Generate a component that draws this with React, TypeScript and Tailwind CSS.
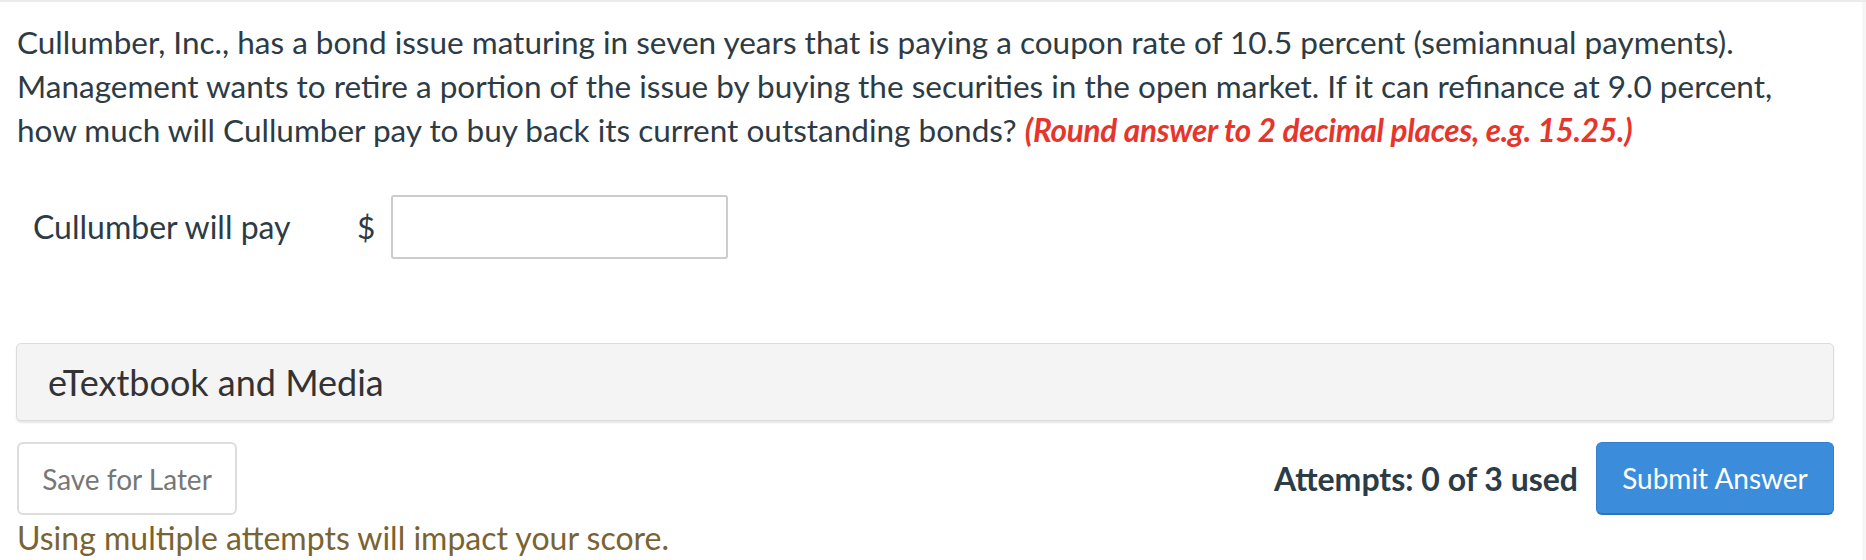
import React from 'react';

export default function App() {
  return (
    <div
      className="w-[1866px] h-[560px] bg-white border-t-2 border-[#ebebeb] overflow-hidden flex"
      style={{ fontFamily: 'Lato, "Open Sans", sans-serif' }}
    >
      <div className="flex-1 h-full pl-[17px] pr-[28px] pt-[18px]">
        {/* Question */}
        <p className="text-[31.5px] leading-[44px] text-[#2d3b45]">
          Cullumber, Inc., has a bond issue maturing in seven years that is paying a coupon rate of 10.5 percent (semiannual payments).
          <br />
          Management wants to retire a portion of the issue by buying the securities in the open market. If it can refinance at 9.0 percent,
          <br />
          how much will Cullumber pay to buy back its current outstanding bonds?{' '}
          <span className="font-bold italic text-[#e8352b] tracking-[-0.25px]">
            (Round answer to 2 decimal places, e.g. 15.25.)
          </span>
        </p>

        {/* Answer row */}
        <div className="flex items-center mt-[43px] pl-[16px]">
          <span className="text-[32px] leading-[44px] text-[#2d3b45] w-[324px]">Cullumber will pay</span>
          <span className="text-[31.5px] leading-[44px] text-[#2d3b45] w-[34px]">$</span>
          <input
            type="text"
            className="w-[337px] h-[64px] border-2 border-[#cccccc] rounded-[3px] bg-white outline-none"
          />
        </div>

        {/* eTextbook panel */}
        <div className="mt-[84px] -ml-[1px] h-[78px] bg-[#f4f4f4] border border-[#dcdcdc] rounded-[5px] shadow-[0_2px_2px_rgba(0,0,0,0.10)] flex items-center px-[31px]">
          <span className="text-[36px] leading-[44px] text-[#333333]">eTextbook and Media</span>
        </div>

        {/* Actions */}
        <div className="flex items-center justify-between mt-[21px]">
          <button className="w-[220px] h-[73px] border-2 border-[#dddddd] rounded-[6px] bg-white text-[28px] text-[#777777]">
            Save for Later
          </button>
          <div className="flex items-center gap-[18px]">
            <span className="text-[32px] font-bold text-[#2d3b45]">Attempts: 0 of 3 used</span>
            <button className="w-[238px] h-[73px] rounded-[6px] bg-[#3b8ddb] border border-[#3580cc] border-b-2 border-b-[#3173ba] text-[28px] text-white">
              Submit Answer
            </button>
          </div>
        </div>

        <p className="mt-[4px] text-[32px] leading-[38px] text-[#7a6332]">
          Using multiple attempts will impact your score.
        </p>
      </div>
      <div className="w-[4px] h-full bg-[#f6f6f6]" />
    </div>
  );
}
